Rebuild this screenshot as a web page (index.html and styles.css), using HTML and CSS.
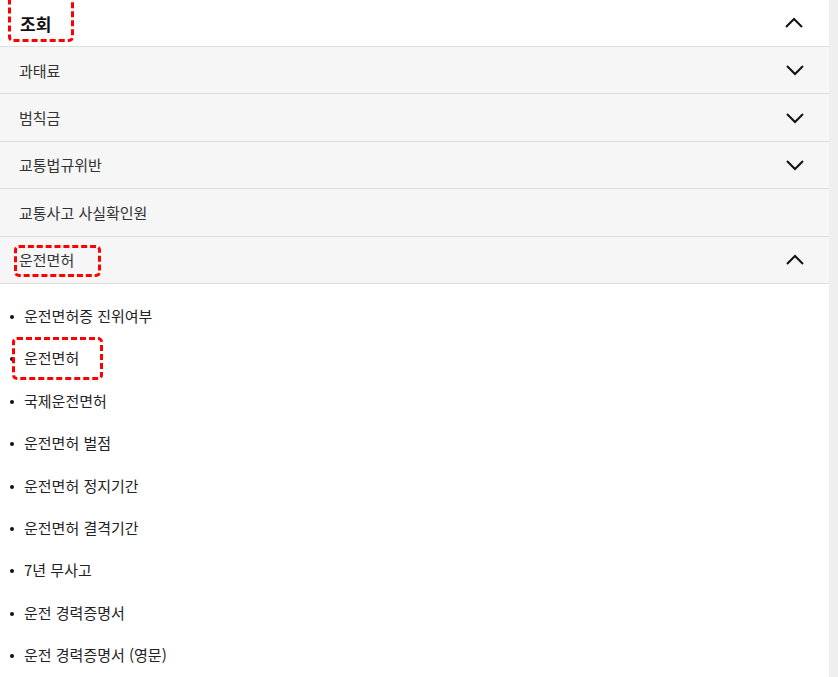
FILE: index.html
```html
<!DOCTYPE html>
<html lang="ko">
<head>
<meta charset="utf-8">
<link rel="stylesheet" href="styles.css">
</head>
<body>
<div class="page">
  <div class="menu">
    <div class="head">
      <span class="head-title">조회</span>
      <svg class="chev" viewBox="0 0 20 14" width="20" height="14"><path d="M2 11 L10 3 L18 11" fill="none" stroke="#111" stroke-width="2"/></svg>
      <span class="mark mark-1"></span>
    </div>
    <div class="row"><span>과태료</span><svg class="chev" viewBox="0 0 20 14" width="20" height="14"><path d="M2 3 L10 11 L18 3" fill="none" stroke="#111" stroke-width="2"/></svg></div>
    <div class="row"><span>범칙금</span><svg class="chev" viewBox="0 0 20 14" width="20" height="14"><path d="M2 3 L10 11 L18 3" fill="none" stroke="#111" stroke-width="2"/></svg></div>
    <div class="row"><span>교통법규위반</span><svg class="chev" viewBox="0 0 20 14" width="20" height="14"><path d="M2 3 L10 11 L18 3" fill="none" stroke="#111" stroke-width="2"/></svg></div>
    <div class="row"><span>교통사고 사실확인원</span></div>
    <div class="row open"><span>운전면허</span><svg class="chev" viewBox="0 0 20 14" width="20" height="14"><path d="M2 11 L10 3 L18 11" fill="none" stroke="#111" stroke-width="2"/></svg><span class="mark mark-2"></span></div>
    <ul class="sub">
      <li>운전면허증 진위여부</li>
      <li class="marked">운전면허<span class="mark mark-3"></span></li>
      <li>국제운전면허</li>
      <li>운전면허 벌점</li>
      <li>운전면허 정지기간</li>
      <li>운전면허 결격기간</li>
      <li>7년 무사고</li>
      <li>운전 경력증명서</li>
      <li>운전 경력증명서 (영문)</li>
    </ul>
  </div>
  <div class="scroll"></div>
</div>
</body>
</html>
```
FILE: styles.css
```css
html, body {
  margin: 0;
  padding: 0;
  background: #fff;
  font-family: "Noto Sans CJK KR", "Noto Sans", sans-serif;
  color: #222;
  overflow: hidden;
}
.page {
  display: flex;
  height: 677px;
}
.menu {
  flex: 1;
}
.scroll {
  width: 9px;
  background: #efefef;
}
.head {
  position: relative;
  display: flex;
  align-items: center;
  justify-content: space-between;
  height: 46px;
  padding: 0 25px 0 20px;
  border-bottom: 1px solid #dcdcdc;
}
.head-title {
  font-size: 17px;
  font-weight: bold;
  color: #111;
}
.row {
  position: relative;
  display: flex;
  align-items: center;
  justify-content: space-between;
  height: 46.4px;
  padding: 0 24px 0 19px;
  background: #f6f6f6;
  border-bottom: 1px solid #dcdcdc;
  font-size: 15px;
  color: #333;
}
.chev {
  display: block;
}
.sub {
  margin: 0;
  padding: 21px 0 0 24px;
  list-style: none;
}
.sub li {
  position: relative;
  height: 42.4px;
  line-height: 22px;
  font-size: 15px;
  color: #222;
}
.sub li::before {
  content: "";
  position: absolute;
  left: -14px;
  top: 10px;
  width: 4px;
  height: 4px;
  border-radius: 50%;
  background: #111;
}
.mark {
  position: absolute;
  border: 3px dashed #f00;
  border-radius: 5px;
  pointer-events: none;
}
.mark-1 {
  left: 8px;
  top: -4px;
  width: 60px;
  height: 40px;
}
.mark-2 {
  left: 14px;
  top: 8px;
  width: 81px;
  height: 26px;
}
.mark-3 {
  left: -12px;
  top: -10px;
  width: 85px;
  height: 37px;
}
```
